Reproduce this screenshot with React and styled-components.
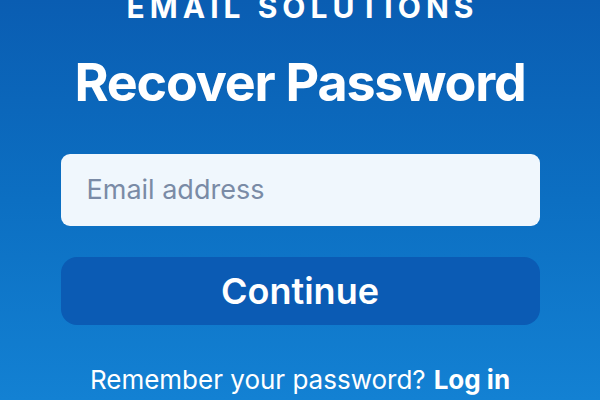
import React from "react";
import styled, { createGlobalStyle } from "styled-components";

const Global = createGlobalStyle`
  html, body { margin: 0; padding: 0; }
  body { font-family: Inter, "Noto Sans", sans-serif; }
`;

const Page = styled.div`
  width: 600px;
  height: 400px;
  overflow: hidden;
  box-sizing: border-box;
  background: linear-gradient(180deg, #0a5db2 0%, #0c6fc2 50%, #1381d3 100%);
  display: flex;
  flex-direction: column;
  align-items: center;
  color: #ffffff;
`;

const Brand = styled.div`
  margin-top: -5px;
  font-size: 30px;
  font-weight: 700;
  letter-spacing: 5px;
  line-height: 24px;
  height: 22px;
  text-transform: uppercase;
  padding-left: 5px;
`;

const Title = styled.h1`
  margin: 34px 0 0;
  font-size: 52px;
  font-weight: 700;
  line-height: 64px;
  letter-spacing: -1.2px;
`;

const Field = styled.input`
  margin-top: 39px;
  width: 479px;
  height: 80px;
  box-sizing: border-box;
  border: none;
  border-radius: 9px;
  background: #f0f7fd;
  padding: 0 26px;
  font-family: Inter, sans-serif;
  font-size: 27px;
  color: #34465f;
  outline: none;
  &::placeholder { color: #7a8ba6; }
`;

const Button = styled.button`
  margin-top: 31px;
  width: 479px;
  height: 76px;
  border: none;
  border-radius: 16px;
  background: #0b5bb4;
  color: #ffffff;
  font-family: Inter, sans-serif;
  font-size: 36px;
  font-weight: 600;
  cursor: pointer;
`;

const Footer = styled.p`
  margin: 35px 0 0;
  font-size: 26px;
  line-height: 40px;
  font-weight: 400;
`;

const Link = styled.a`
  margin-left: 8px;
  font-weight: 700;
  color: #ffffff;
  text-decoration: none;
`;

export default function App() {
  return (
    <>
      <Global />
      <Page>
        <Brand>Email Solutions</Brand>
        <Title>Recover Password</Title>
        <Field placeholder="Email address" />
        <Button>Continue</Button>
        <Footer>
          Remember your password?<Link href="#">Log in</Link>
        </Footer>
      </Page>
    </>
  );
}
